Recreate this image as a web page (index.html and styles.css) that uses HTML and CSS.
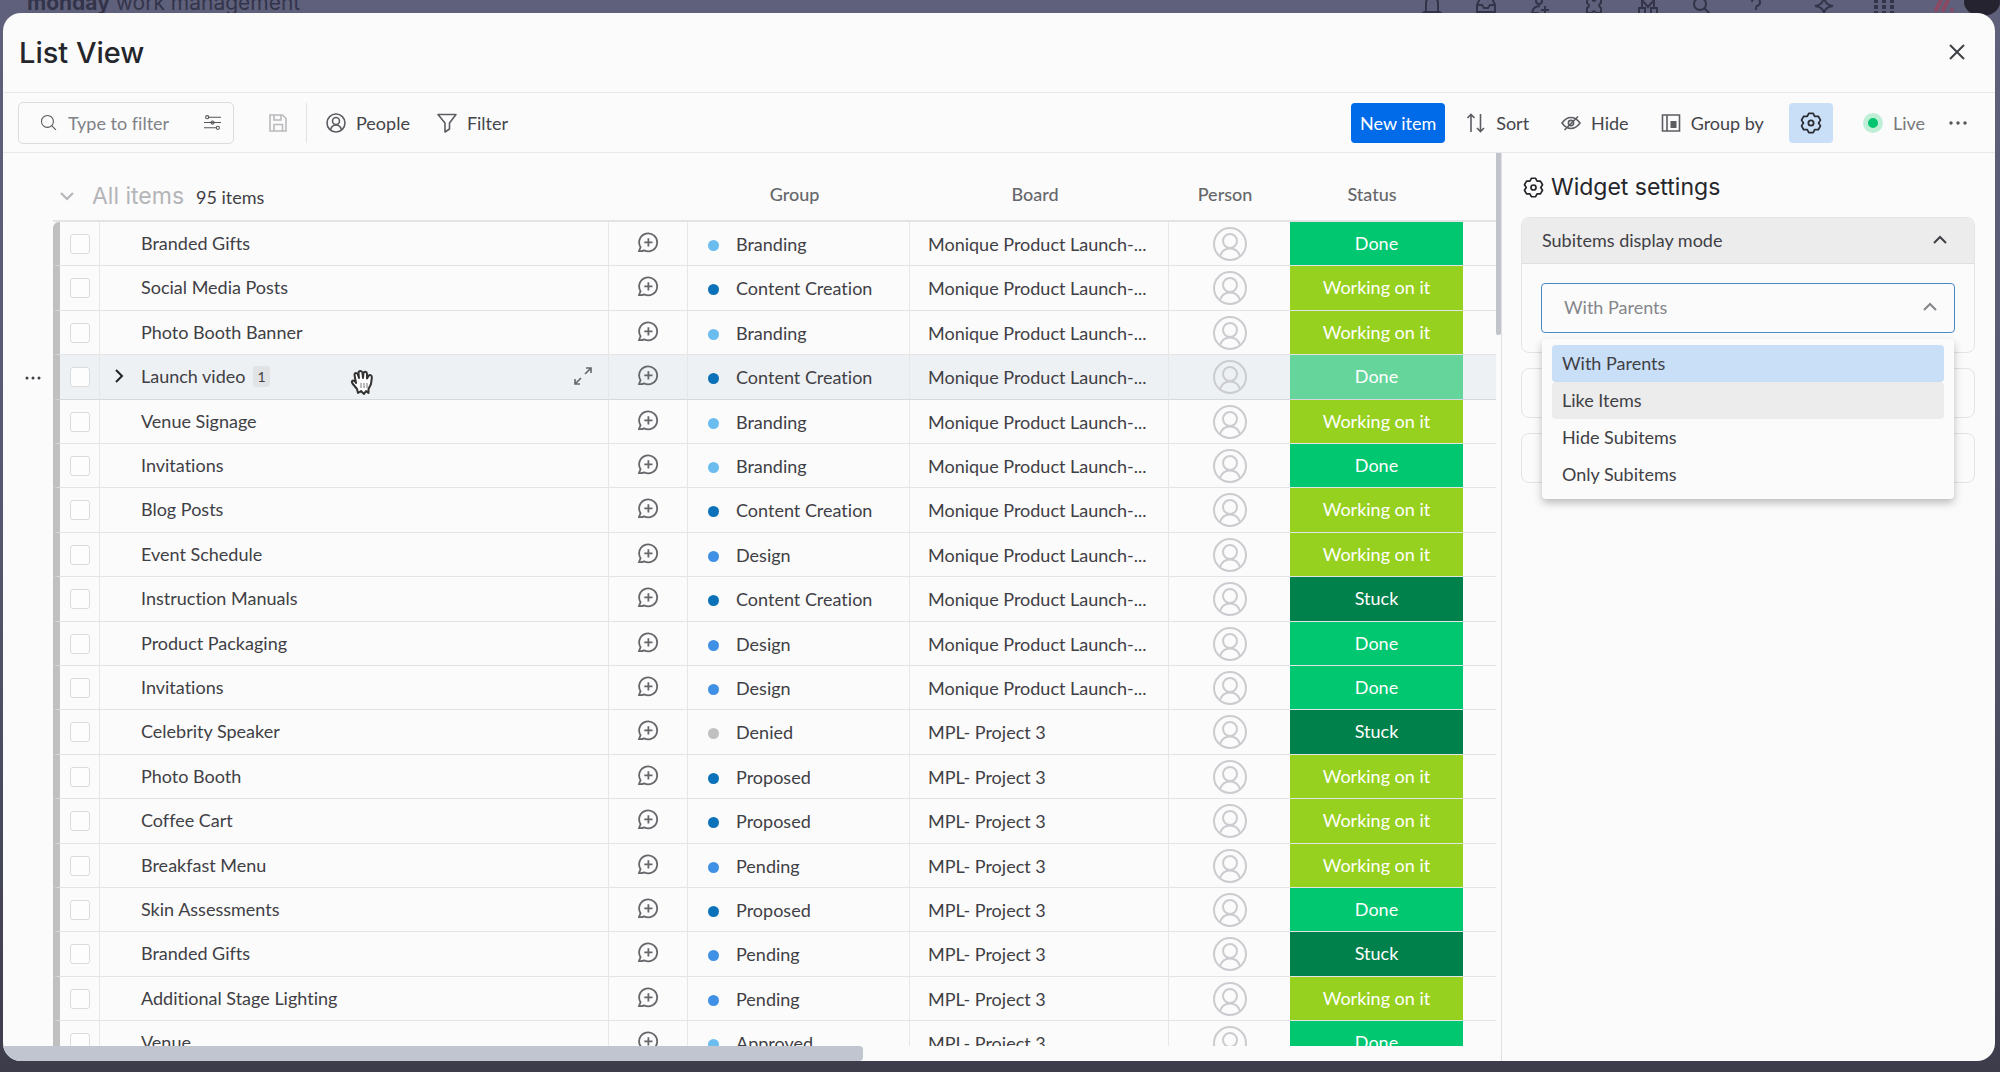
FILE: index.html
```
<!DOCTYPE html>
<html lang="en">

<head>
  <meta charset="utf-8">
  <meta name="viewport" content="width=device-width, initial-scale=1.0">
  <title>List View</title>
  <link rel="stylesheet" href="styles.css">
</head>

<body>
  <!-- icons used more than once -->
  <svg class="sprite" aria-hidden="true">
    <symbol id="i-gear" viewBox="0 0 20 20">
      <path stroke-linejoin="round" d="M12 1.2 L13.4 4 L16.6 3.9 L18.6 7.4 L16.9 10 L18.6 12.6 L16.6 16.1 L13.4 16 L12 18.8 H8 L6.6 16 L3.4 16.1 L1.4 12.6 L3.1 10 L1.4 7.4 L3.4 3.9 L6.6 4 L8 1.2 Z" />
      <circle cx="10" cy="10" r="2.4" />
    </symbol>
    <symbol id="i-bubble" viewBox="0 0 22 22">
      <path d="M2 20 L3.6 16.2 A9 9 0 1 1 7.2 19.4 Q4.6 20.6 2 20 Z M11.4 7.2 V15.4 M7.3 11.3 H15.5" />
    </symbol>
    <symbol id="i-person" viewBox="0 0 34 34">
      <circle cx="17" cy="17" r="16" />
      <circle cx="17" cy="14" r="7" />
      <path d="M7 29 Q9.5 21.5 17 21.5 Q24.5 21.5 27 29" />
    </symbol>
    <symbol id="i-up" viewBox="0 0 16 16">
      <path d="M2 11 L8 5 L14 11" />
    </symbol>
  </svg>

  <div class="topbar">
    <div class="brand"><b>monday</b> work management</div>
    <div class="topicons">
      <svg viewBox="0 0 20 20"><path d="M4 15 V7 a6 6 0 0 1 12 0 V15 l1.5 1 H2.5 Z M8 18 h4" /></svg>
      <svg viewBox="0 0 20 20"><path d="M1 9 L4 2 H16 L19 9 V16 H1 Z M1 9 H6 L8 12 H12 L14 9 H19" /></svg>
      <svg viewBox="0 0 20 20"><circle cx="9" cy="5" r="3" /><path d="M2 17 Q3 10 10 10 M2 17 H9 M15 10 V18 M11 14 H19" /></svg>
      <svg viewBox="0 0 20 20"><path d="M3 3 H8 q2 4 4 0 H17 V7 q-4 2 0 5 V17 H12 q-2 -4 -4 0 H3 V12 q4 -2 0 -5 Z" /></svg>
      <svg viewBox="0 0 20 20"><path d="M1 12 H7 V18 H1 Z M13 12 H19 V18 H13 Z M4 12 V4 L10 11 L16 4 V12" /></svg>
      <svg viewBox="0 0 20 20"><circle cx="8" cy="8" r="6" /><path d="M12.5 12.5 L18 18" /></svg>
      <svg viewBox="0 0 20 20"><path d="M6 6 a4 4 0 1 1 5 4 q-1 .5 -1 4 M10 17 v1" /></svg>
      <svg class="star" viewBox="0 0 20 20"><path d="M10 1 Q11 9 19 10 Q11 11 10 17 Q9 11 1 10 Q9 9 10 1 Z" /></svg>
      <svg class="dots" viewBox="0 0 24 20"><path d="M2 5 H23 M2 11 H23 M2 17 H23" /></svg>
      <svg class="logo" viewBox="0 0 20 20"><path d="M2 14 L7 4 M9 14 L14 4 M18 14 v0" /></svg>
      <span class="avatar"></span>
    </div>
  </div>

  <main class="modal">
    <header class="modal-header">
      <h1>List View</h1>
      <button class="close" aria-label="Close"><svg viewBox="0 0 16 16"><path d="M1 1 L15 15 M15 1 L1 15" /></svg></button>
    </header>

    <div class="toolbar">
      <label class="search">
        <svg viewBox="0 0 16 16"><circle cx="7" cy="7" r="5.6" /><path d="M11 11 L15 15" /></svg>
        <input type="text" placeholder="Type to filter" aria-label="Type to filter">
        <svg viewBox="0 0 16 16"><path d="M4 3 H16 M0 8 H16 M0 13 H12" /><circle cx="3" cy="3" r="1.5" /><circle cx="8" cy="8" r="1.5" /><circle cx="13" cy="13" r="1.5" /></svg>
      </label>
      <button class="tool save" aria-label="Save"><svg viewBox="0 0 20 20"><path d="M2 2 H14.5 L18 5.5 V18 H2 Z M6 2 V7 H13 V2 M6 18 V11.5 H14.5 V18" /></svg></button>
      <span class="divider"></span>
      <button class="tool people"><svg viewBox="0 0 20 20"><circle cx="10" cy="10" r="9" /><circle cx="10" cy="8" r="3.5" /><path d="M4.5 16.5 Q6 12 10 12 Q14 12 15.5 16.5" /></svg>People</button>
      <button class="tool filter"><svg viewBox="0 0 20 20"><path stroke-linejoin="round" d="M1 1.5 H19 L12.5 10 V16 L8 19 V10 Z" /></svg>Filter</button>

      <div class="tools-right">
        <button class="new-item">New item</button>
        <button class="tool sort"><svg viewBox="0 0 20 20"><path d="M5 19 V1.5 M1.5 5 L5 1.5 L8.5 5 M14.5 1 V18.5 M11 15 L14.5 18.5 L18 15" /></svg>Sort</button>
        <button class="tool hide"><svg viewBox="0 0 20 20"><path d="M1 10 Q5 4.5 10 4.5 Q15 4.5 19 10 Q15 15.5 10 15.5 Q5 15.5 1 10 Z M3.5 17 L17 3.5" /><circle cx="10" cy="10" r="2.6" /></svg>Hide</button>
        <button class="tool group-by"><svg viewBox="0 0 20 20"><path d="M1.5 2 H18.5 V18 H1.5 Z M6 2 V18" /><path class="solid" d="M9.5 8 H15.5 V15 H9.5 Z" /></svg>Group by</button>
        <button class="gear" aria-label="Settings"><svg><use href="#i-gear" /></svg></button>
        <span class="live"><i></i>Live</span>
        <button class="more" aria-label="More"><svg viewBox="0 0 18 4"><circle class="solid" cx="2" cy="2" r="1.7" /><circle class="solid" cx="9" cy="2" r="1.7" /><circle class="solid" cx="16" cy="2" r="1.7" /></svg></button>
      </div>
    </div>

    <div class="content">
      <section class="list">
        <div class="scroller">
          <table>
            <colgroup>
              <col class="c-menu">
              <col class="c-check">
              <col class="c-name">
              <col class="c-chat">
              <col class="c-group">
              <col class="c-board">
              <col class="c-person">
              <col class="c-status">
              <col>
            </colgroup>
            <thead>
              <tr>
                <th class="no-line"></th>
                <th class="title" colspan="3">
                  <svg viewBox="0 0 16 16"><path d="M2 5 L8 11 L14 5" /></svg><span class="all">All items</span><span class="count">95 items</span>
                </th>
                <th>Group</th>
                <th>Board</th>
                <th>Person</th>
                <th>Status</th>
                <th></th>
              </tr>
            </thead>
            <tbody id="rows"></tbody>
          </table>
        </div>
        <div class="hbar"></div>
        <div class="vbar"></div>
        <svg class="hand" viewBox="0 0 24 26"><path stroke-linejoin="round" d="M8 24 L7 20 L2.5 14.5 Q1 12 3 11.5 Q5 11.5 6 14 L4.5 6 Q4.5 4 6 4 Q7.5 4 8 6 L9 9 L8.5 4 Q8.5 2 10.5 2 Q12 2 12.5 4 L13 9 L13.5 4 Q14 2.5 15.5 2.7 Q17 3 17 5 L17 9.5 L18.5 7 Q19.5 5.5 21 6.3 Q22 7 21.8 9 L21 15 L18.5 20 L18.5 24 L16 22 L14 25 L11 22 Z" /><path class="lines" d="M11 14 V19 M14 14 V19 M17 14 V19" /></svg>
      </section>

      <aside class="settings">
        <h2><svg><use href="#i-gear" /></svg>Widget settings</h2>
        <div class="card">
          <button class="card-head">Subitems display mode<svg><use href="#i-up" /></svg></button>
          <div class="card-body">
            <button class="select" aria-haspopup="listbox" aria-expanded="true">With Parents<svg><use href="#i-up" /></svg></button>
            <ul class="menu" role="listbox">
              <li class="selected" role="option">With Parents</li>
              <li class="hovered" role="option">Like Items</li>
              <li role="option">Hide Subitems</li>
              <li role="option">Only Subitems</li>
            </ul>
          </div>
        </div>
        <div class="card closed"></div>
        <div class="card closed"></div>
      </aside>
    </div>
  </main>

  <script src="script.js"></script>
</body>

</html>
```
FILE: styles.css
```
* {
  box-sizing: border-box;
}

body {
  font-family: Lato, "Liberation Sans", sans-serif;
  font-size: 18px;
  font-variant-ligatures: none;
  color: #3f4045;
  background: linear-gradient(#5f607b, #56576f 50%, #3c3c4b);
  height: 100vh;
  overflow: hidden;
  padding: 13px 5px 11px 3px;
  margin: 0;
}

button,
input {
  font: inherit;
  color: inherit;
  background: none;
  border: 0;
  padding: 0;
}

svg {
  fill: none;
  stroke: currentColor;
  flex: none;
}

.sprite {
  position: absolute;
  width: 0;
  height: 0;
}

/* page behind the modal */
.topbar {
  position: absolute;
  top: 0;
  left: 0;
  right: 0;
  height: 16px;
  overflow: hidden;
  display: flex;
  justify-content: space-between;
  align-items: flex-end;
  color: #33344a;
}

.brand {
  font-family: Inter, "Liberation Sans", sans-serif;
  font-size: 21px;
  line-height: 26px;
  padding-left: 27px;
}

.topicons {
  display: flex;
  align-items: flex-end;
  gap: 34px;
}

.topicons svg {
  width: 20px;
  height: 20px;
  stroke-width: 2;
}

.topicons .star {
  margin-left: 14px;
}

.topicons .dots {
  width: 24px;
  margin: 0 4px;
  stroke-width: 4;
  stroke-dasharray: 4 4;
}

.topicons .logo {
  color: #8a4a63;
  stroke-width: 4;
  stroke-linecap: round;
}

.avatar {
  width: 36px;
  height: 28px;
  margin-left: -24px;
  border-radius: 50%;
  background: #262330;
}

.modal {
  position: relative;
  height: 100%;
  display: flex;
  flex-direction: column;
  background: #fbfbfb;
  border-radius: 18px;
  overflow: hidden;
}

.modal-header {
  height: 80px;
  display: flex;
  justify-content: space-between;
  align-items: center;
  padding: 0 30px 0 16px;
  border-bottom: 1px solid #e8e8ea;
}

h1,
h2 {
  margin: 0;
  font-family: Inter, "Liberation Sans", sans-serif;
  color: #25262b;
}

h1 {
  font-size: 29px;
  font-weight: 500;
}

.close svg {
  display: block;
  width: 16px;
  height: 16px;
  margin-bottom: 2px;
  stroke-width: 2;
}

/* toolbar */
.toolbar {
  height: 60px;
  display: flex;
  align-items: center;
  padding: 0 28px 0 15px;
  border-bottom: 1px solid #e8e8ea;
  color: #55565a;
}

.search {
  display: flex;
  align-items: center;
  width: 216px;
  height: 42px;
  padding: 0 12px 0 21px;
  border: 1px solid #dcdcde;
  border-radius: 5px;
}

.search svg {
  width: 17px;
  height: 17px;
}

.search input {
  flex: 1;
  min-width: 0;
  margin-left: 11px;
}

.search input::placeholder {
  color: #808186;
  opacity: 1;
}

.tool {
  display: flex;
  align-items: center;
  gap: 10px;
  color: #44454a;
}

.tool svg {
  width: 20px;
  height: 20px;
  stroke-width: 1.6;
  color: #5c5d62;
}

.save {
  margin-left: 34px;
}

.save svg {
  color: #b9babd;
}

.divider {
  width: 1px;
  height: 40px;
  margin: 0 19px 0 18px;
  background: #e4e4e6;
}

.filter {
  margin-left: 27px;
}

.tools-right {
  display: flex;
  align-items: center;
  margin-left: auto;
}

.new-item {
  width: 94px;
  height: 40px;
  border-radius: 4px;
  background: #006be8;
  color: #fff;
}

.sort {
  margin-left: 21px;
}

.hide,
.group-by {
  margin-left: 32px;
}

.solid {
  fill: currentColor;
  stroke: none;
}

.gear {
  width: 44px;
  height: 40px;
  margin-left: 25px;
  border-radius: 4px;
  background: #c9dff8;
  color: #2b2c31;
}

.gear svg {
  display: block;
  width: 22px;
  height: 22px;
  margin: 0 auto;
  stroke-width: 1.6;
}

.live {
  display: flex;
  align-items: center;
  gap: 10px;
  margin-left: 30px;
  color: #77787c;
}

.live i {
  width: 20px;
  height: 20px;
  border: 5px solid #bfeed6;
  border-radius: 50%;
  background: #00c46e;
}

.more {
  margin-left: 24px;
}

.more svg {
  display: block;
  width: 18px;
  height: 4px;
}

/* list */
.content {
  flex: 1;
  min-height: 0;
  display: flex;
}

.list {
  position: relative;
  flex: 1;
  min-width: 0;
  display: flex;
  flex-direction: column;
  border-right: 1px solid #dfe0e4;
}

.scroller {
  flex: 1;
  min-height: 0;
  overflow: hidden;
  padding-right: 5px;
}

.hbar {
  width: 860px;
  height: 15px;
  border-radius: 0 4px 4px 0;
  background: #c1c5cf;
}

.vbar {
  position: absolute;
  top: 0;
  right: 0;
  width: 5px;
  height: 182px;
  border-radius: 0 0 2px 2px;
  background: #c1c4cb;
}

.hand {
  position: absolute;
  left: 347px;
  top: 216px;
  width: 24px;
  height: 26px;
  fill: #fff;
  stroke: #333;
  stroke-width: 2;
}

.hand .lines {
  stroke: #777;
  stroke-width: 1;
}

table {
  width: 100%;
  table-layout: fixed;
  border-collapse: separate;
  border-spacing: 0;
}

.c-menu {
  width: 50px;
}

.c-check {
  width: 47px;
}

.c-name {
  width: 509px;
}

.c-chat {
  width: 79px;
}

.c-group {
  width: 222px;
}

.c-board {
  width: 259px;
}

.c-person {
  width: 121px;
}

.c-status {
  width: 173px;
}

th {
  height: 69px;
  padding: 14px 9px 0 0;
  border-bottom: 2px solid #e2e3e5;
  font-weight: 500;
  color: #66676b;
}

th.no-line {
  border-bottom: 0;
}

th.title {
  padding: 18px 0 0 6px;
  text-align: left;
}

.title svg {
  width: 16px;
  height: 16px;
  margin-right: 17px;
  color: #b4b5b8;
  stroke-width: 2;
}

.all {
  font-family: Inter, "Liberation Sans", sans-serif;
  font-size: 23px;
  font-weight: 400;
  color: #b4b5b8;
}

.count {
  margin-left: 12px;
  font-weight: 400;
  color: #3f4045;
}

td {
  height: 44px;
  padding: 0;
  border-bottom: 1px solid #e2e4e7;
  border-right: 1px solid #e6e7e9;
  white-space: nowrap;
  overflow: hidden;
}

/* two rows in five take the spare pixel */
tr:nth-child(5n+2) td,
tr:nth-child(5n+4) td {
  height: 45px;
}

td.menu-cell {
  border: 0;
}

.menu-cell svg {
  display: block;
  width: 16px;
  height: 4px;
  margin-left: 22px;
}

td.check {
  border-left: 7px solid #c0c0c0;
  text-align: center;
}

tbody tr:first-child .check {
  border-top-left-radius: 6px;
}

.check input {
  appearance: none;
  display: block;
  width: 20px;
  height: 20px;
  margin: 0 auto;
  border: 1px solid #dadbdd;
  border-radius: 3px;
  background: #fdfdfd;
}

.name,
.status {
  padding-bottom: 2px;
}

.name div {
  display: flex;
  align-items: center;
  padding: 0 16px 0 12px;
}

.name .arrow {
  width: 14px;
  height: 16px;
  margin-right: 15px;
  stroke-width: 2;
  color: #222;
}

.name .badge {
  margin-left: 8px;
  padding: 2px 4px;
  border-radius: 3px;
  background: #e2e3e5;
  font-size: 14px;
}

.name .expand {
  width: 18px;
  height: 18px;
  margin-left: auto;
  stroke-width: 1.6;
  color: #66676b;
}

.chat svg {
  display: block;
  width: 22px;
  height: 22px;
  margin: 0 auto 4px;
  stroke-width: 1.8;
  color: #66676b;
}

.dot {
  display: inline-block;
  width: 11px;
  height: 11px;
  margin: 0 17px 0 20px;
  border-radius: 50%;
}

.sky {
  background: #6bbdf0;
}

.navy {
  background: #0b72b9;
}

.blue {
  background: #4090e5;
}

.grey {
  background: #c0c0c0;
}

.board {
  padding-left: 18px;
}

td.person {
  border-right: 0;
}

.person svg {
  display: block;
  width: 34px;
  height: 34px;
  margin: 0 auto;
  stroke-width: 2;
  color: #cbcccf;
}

.status {
  text-align: center;
  color: #fff;
}

td.status,
td:last-child {
  border-right: 0;
}

.done {
  background: #00c770;
}

.working {
  background: #97d11f;
}

.stuck {
  background: #00804a;
}

.hover td:not(.menu-cell) {
  background: #eef1f3;
  border-bottom-color: #d5d8dc;
}

.hover td.status {
  background: #66d59c;
}

/* settings panel */
.settings {
  width: 493px;
  padding: 19px 20px 0 19px;
}

h2 {
  display: flex;
  align-items: center;
  gap: 7px;
  height: 30px;
  margin-bottom: 15px;
  padding-left: 2px;
  font-size: 23px;
  font-weight: 400;
}

h2 svg {
  width: 21px;
  height: 21px;
  stroke-width: 1.6;
}

.card {
  margin-bottom: 15px;
  border: 1px solid #e4e4e6;
  border-radius: 8px;
}

.closed {
  height: 50px;
}

.card-head {
  display: flex;
  justify-content: space-between;
  align-items: center;
  width: 100%;
  height: 46px;
  padding: 0 26px 2px 20px;
  border-bottom: 1px solid #e0e0e2;
  border-radius: 8px 8px 0 0;
  background: #ececec;
}

.card-head svg,
.select svg {
  width: 16px;
  height: 16px;
  stroke-width: 2;
}

.card-body {
  position: relative;
  padding: 19px;
}

.select {
  display: flex;
  justify-content: space-between;
  align-items: center;
  width: 100%;
  height: 50px;
  padding: 0 16px 2px 22px;
  border: 1px solid #4a88c4;
  border-radius: 4px;
  color: #85868a;
}

.menu {
  position: absolute;
  top: 75px;
  left: 20px;
  right: 20px;
  z-index: 1;
  margin: 0;
  padding: 6px 10px;
  list-style: none;
  border-radius: 4px;
  background: #fbfbfb;
  box-shadow: 0 4px 8px rgba(0, 0, 0, 0.25);
}

.menu li {
  height: 37px;
  line-height: 37px;
  padding-left: 10px;
  border-radius: 4px;
}

.menu .selected {
  background: #c9dff8;
}

.menu .hovered {
  background: #ececec;
}
```
FILE: script.js
```
var L = "Monique Product Launch-...";
var M = "MPL- Project 3";

// name, group, dot colour, board, status
var items = [
  ["Branded Gifts", "Branding", "sky", L, "Done"],
  ["Social Media Posts", "Content Creation", "navy", L, "Working on it"],
  ["Photo Booth Banner", "Branding", "sky", L, "Working on it"],
  ["Launch video", "Content Creation", "navy", L, "Done"],
  ["Venue Signage", "Branding", "sky", L, "Working on it"],
  ["Invitations", "Branding", "sky", L, "Done"],
  ["Blog Posts", "Content Creation", "navy", L, "Working on it"],
  ["Event Schedule", "Design", "blue", L, "Working on it"],
  ["Instruction Manuals", "Content Creation", "navy", L, "Stuck"],
  ["Product Packaging", "Design", "blue", L, "Done"],
  ["Invitations", "Design", "blue", L, "Done"],
  ["Celebrity Speaker", "Denied", "grey", M, "Stuck"],
  ["Photo Booth", "Proposed", "navy", M, "Working on it"],
  ["Coffee Cart", "Proposed", "navy", M, "Working on it"],
  ["Breakfast Menu", "Pending", "blue", M, "Working on it"],
  ["Skin Assessments", "Proposed", "navy", M, "Done"],
  ["Branded Gifts", "Pending", "blue", M, "Stuck"],
  ["Additional Stage Lighting", "Pending", "blue", M, "Working on it"],
  ["Venue", "Approved", "sky", M, "Done"]
];

var dots = '<svg viewBox="0 0 16 4"><circle class="solid" cx="2" cy="2" r="1.5" /><circle class="solid" cx="8" cy="2" r="1.5" /><circle class="solid" cx="14" cy="2" r="1.5" /></svg>';

var html = "";
items.forEach(function (item, i) {
  var open = i === 3;
  var arrow = '<svg class="arrow" viewBox="0 0 14 16">' + (open ? '<path d="M4 2 L10 8 L4 14" />' : '') + '</svg>';
  var extra = open ? '<span class="badge">1</span><svg class="expand" viewBox="0 0 18 18"><path d="M11 7 L17 1 M12 1 H17 V6 M7 11 L1 17 M1 12 V17 H6" /></svg>' : '';
  html += '<tr' + (open ? ' class="hover"' : '') + '>' +
    '<td class="menu-cell">' + (open ? dots : '') + '</td>' +
    '<td class="check"><input type="checkbox" aria-label="' + item[0] + '"></td>' +
    '<td class="name"><div>' + arrow + item[0] + extra + '</div></td>' +
    '<td class="chat"><svg><use href="#i-bubble" /></svg></td>' +
    '<td class="group"><span class="dot ' + item[2] + '"></span>' + item[1] + '</td>' +
    '<td class="board">' + item[3] + '</td>' +
    '<td class="person"><svg><use href="#i-person" /></svg></td>' +
    '<td class="status ' + item[4].split(" ")[0].toLowerCase() + '">' + item[4] + '</td>' +
    '<td></td></tr>';
});
document.getElementById("rows").innerHTML = html;
```
